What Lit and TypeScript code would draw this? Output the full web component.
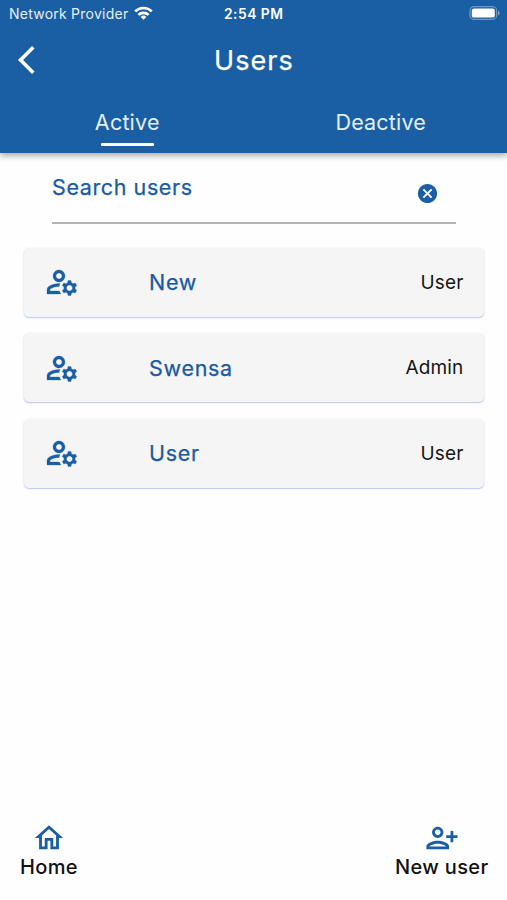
import { LitElement, html, css, svg } from "lit";
import { customElement, property } from "lit/decorators.js";

const icons = {
  back: svg`<path d="M11.67 3.87L9.9 2.1 0 12l9.9 9.9 1.77-1.77L3.54 12z"/>`,
  cancel: svg`<path d="M12 2C6.47 2 2 6.47 2 12s4.47 10 10 10 10-4.47 10-10S17.53 2 12 2zm5 13.59L15.59 17 12 13.41 8.41 17 7 15.59 10.59 12 7 8.41 8.41 7 12 10.59 15.59 7 17 8.41 13.41 12 17 15.59z"/>`,
  manage: svg`<path d="M4 18v-.65c0-.34.16-.66.41-.81C6.1 15.53 8.03 15 10 15c.03 0 .05 0 .08.01.1-.7.3-1.37.59-1.98-.22-.02-.44-.03-.67-.03-2.42 0-4.68.67-6.61 1.82-.88.52-1.39 1.5-1.39 2.53V20h9.26c-.42-.6-.75-1.28-.97-2H4z"/><path d="M10 12c2.21 0 4-1.79 4-4s-1.79-4-4-4-4 1.79-4 4 1.79 4 4 4zm0-6c1.1 0 2 .9 2 2s-.9 2-2 2-2-.9-2-2 .9-2 2-2z"/><path d="M20.75 16c0-.22-.03-.42-.06-.63l1.14-1.01-1-1.73-1.45.49c-.32-.27-.68-.48-1.08-.63L18 11h-2l-.3 1.49c-.4.15-.76.36-1.08.63l-1.45-.49-1 1.73 1.14 1.01c-.03.21-.06.41-.06.63s.03.42.06.63l-1.14 1.01 1 1.73 1.45-.49c.32.27.68.48 1.08.63L16 21h2l.3-1.49c.4-.15.76-.36 1.08-.63l1.45.49 1-1.73-1.14-1.01c.03-.21.06-.41.06-.63zM17 18c-1.1 0-2-.9-2-2s.9-2 2-2 2 .9 2 2-.9 2-2 2z"/>`,
  home: svg`<path d="M12 5.69l5 4.5V18h-2v-6H9v6H7v-7.81l5-4.5M12 3L2 12h3v8h6v-6h2v6h6v-8h3L12 3z"/>`,
  addUser: svg`<path d="M13 8c0-2.21-1.79-4-4-4S5 5.79 5 8s1.79 4 4 4 4-1.79 4-4zm-2 0c0 1.1-.9 2-2 2s-2-.9-2-2 .9-2 2-2 2 .9 2 2zM1 18v2h16v-2c0-2.66-5.33-4-8-4s-8 1.34-8 4zm2 0c.2-.71 3.3-2 6-2 2.69 0 5.78 1.28 6 2H3zM20 15v-3h3v-2h-3V7h-2v3h-3v2h3v3z"/>`,
};

const icon = (name: keyof typeof icons) =>
  html`<svg class="icon ${name}" viewBox="0 0 24 24">${icons[name]}</svg>`;

@customElement("user-card")
class UserCard extends LitElement {
  @property() name = "";
  @property() role = "";

  static styles = css`
    :host {
      display: grid;
      grid-template-columns: 105px 1fr auto;
      align-items: center;
      box-sizing: border-box;
      height: 69px;
      padding: 0 20.5px 0 20px;
      border-radius: 5px;
      background: #f5f5f5;
      box-shadow: 0 1px 1.5px rgba(40, 85, 180, 0.32), 0 0 2px rgba(0, 0, 0, 0.05);
    }
    .icon {
      display: block;
      width: 36px;
      height: 36px;
      fill: #1a5fa3;
      stroke: #1a5fa3;
      stroke-width: 0.2;
    }
    .name {
      font-size: 21.5px;
      letter-spacing: 0.7px;
      color: #1a5aa2;
      -webkit-text-stroke: 0.25px #1a5aa2;
    }
    .role {
      font-size: 19px;
      letter-spacing: 0.15px;
      color: #161616;
    }
  `;

  render() {
    return html`${icon("manage")}<span class="name">${this.name}</span><span class="role">${this.role}</span>`;
  }
}

@customElement("app-root")
class AppRoot extends LitElement {
  static styles = css`
    :host {
      display: flex;
      flex-direction: column;
      height: 900px;
      background: #fefefe;
      font-family: Inter, sans-serif;
      overflow: hidden;
    }
    .icon {
      display: block;
      fill: #1a5fa3;
    }
    header {
      height: 152.5px;
      background: #1a5fa3;
      color: #fff;
      box-shadow: 0 3px 6px rgba(0, 0, 0, 0.32);
    }
    .status,
    .title {
      display: grid;
      grid-template-columns: 1fr auto 1fr;
      align-items: center;
    }
    .status {
      height: 27px;
      padding: 0 7px 0 9px;
      font-size: 14px;
    }
    .carrier {
      display: flex;
      align-items: center;
      gap: 5.5px;
      letter-spacing: 0.24px;
      color: #e6eef6;
    }
    .wifi {
      width: 19px;
      height: 14px;
      margin-top: -2px;
    }
    .time {
      margin-right: 1.5px;
      font-size: 13.8px;
      font-weight: 600;
      letter-spacing: 0.5px;
    }
    .battery {
      justify-self: end;
      width: 31px;
      height: 14px;
      margin-top: -1px;
    }
    .title {
      height: 66px;
      padding: 0 18px;
    }
    .back {
      width: 34px;
      height: 34px;
      fill: #fff;
    }
    h1 {
      margin: 0;
      padding-left: 1px;
      font-size: 27px;
      font-weight: 400;
      letter-spacing: 1.05px;
      -webkit-text-stroke: 0.25px #fff;
    }
    .tabs {
      display: grid;
      grid-template-columns: 1fr 1fr;
      height: 59px;
    }
    .tab {
      display: flex;
      flex-direction: column;
      align-items: center;
      padding: 16px 0 0 1px;
      gap: 7px;
      font-size: 21.5px;
      line-height: 27px;
      letter-spacing: 0.2px;
      color: #e4eef8;
    }
    .mark {
      width: 53px;
      height: 3px;
      border-radius: 1px;
      background: #fff;
    }
    .search {
      display: flex;
      justify-content: space-between;
      box-sizing: border-box;
      height: 49px;
      margin: 22.5px 51px 0 52px;
      padding-right: 17.5px;
      border-bottom: 2px solid #b4b4b4;
      font-size: 21.5px;
      line-height: 24px;
      letter-spacing: 0.6px;
      color: #1a5aa2;
      -webkit-text-stroke: 0.25px #1a5aa2;
    }
    .cancel {
      width: 23px;
      height: 23px;
      margin-top: 7px;
    }
    .list {
      flex: 1;
      display: flex;
      flex-direction: column;
      gap: 16.5px;
      padding: 23.5px 23px 0 24px;
    }
    footer {
      display: flex;
      justify-content: space-between;
      height: 79px;
      padding: 0 18.5px 0 20px;
    }
    .action {
      display: flex;
      flex-direction: column;
      align-items: center;
      font-size: 20px;
      font-weight: 500;
      line-height: 25px;
      letter-spacing: 0.34px;
      color: #111;
    }
    .home,
    .addUser {
      width: 34px;
      height: 34px;
    }
  `;

  render() {
    return html`
      <header>
        <div class="status">
          <span class="carrier">Network Provider
            <svg class="wifi" viewBox="0 0 19 14" fill="none" stroke="#fff" stroke-width="2.7">
              <path d="M1.2 5.4a11.8 11.8 0 0 1 16.6 0M4.4 8.9a7.3 7.3 0 0 1 10.2 0"/>
              <path d="M9.5 13.8L6.6 11a4.1 4.1 0 0 1 5.8 0z" fill="#fff" stroke="none"/>
            </svg>
          </span>
          <span class="time">2:54 PM</span>
          <svg class="battery" viewBox="0 0 31 14">
            <rect x="1" y=".7" width="26.6" height="12.6" rx="3.8" fill="none" stroke="#fff" stroke-opacity=".36" stroke-width="1.2"/>
            <rect x="2.8" y="2.4" width="23" height="9.2" rx="2.2" fill="#fff"/>
            <path d="M29 4.7c2 .8 2 3.8 0 4.6z" fill="#fff" fill-opacity=".45"/>
          </svg>
        </div>
        <div class="title">${icon("back")}<h1>Users</h1></div>
        <nav class="tabs">
          <div class="tab">Active<span class="mark"></span></div>
          <div class="tab">Deactive</div>
        </nav>
      </header>
      <div class="search"><span>Search users</span>${icon("cancel")}</div>
      <main class="list">
        <user-card name="New" role="User"></user-card>
        <user-card name="Swensa" role="Admin"></user-card>
        <user-card name="User" role="User"></user-card>
      </main>
      <footer>
        <div class="action">${icon("home")}Home</div>
        <div class="action">${icon("addUser")}New user</div>
      </footer>
    `;
  }
}
